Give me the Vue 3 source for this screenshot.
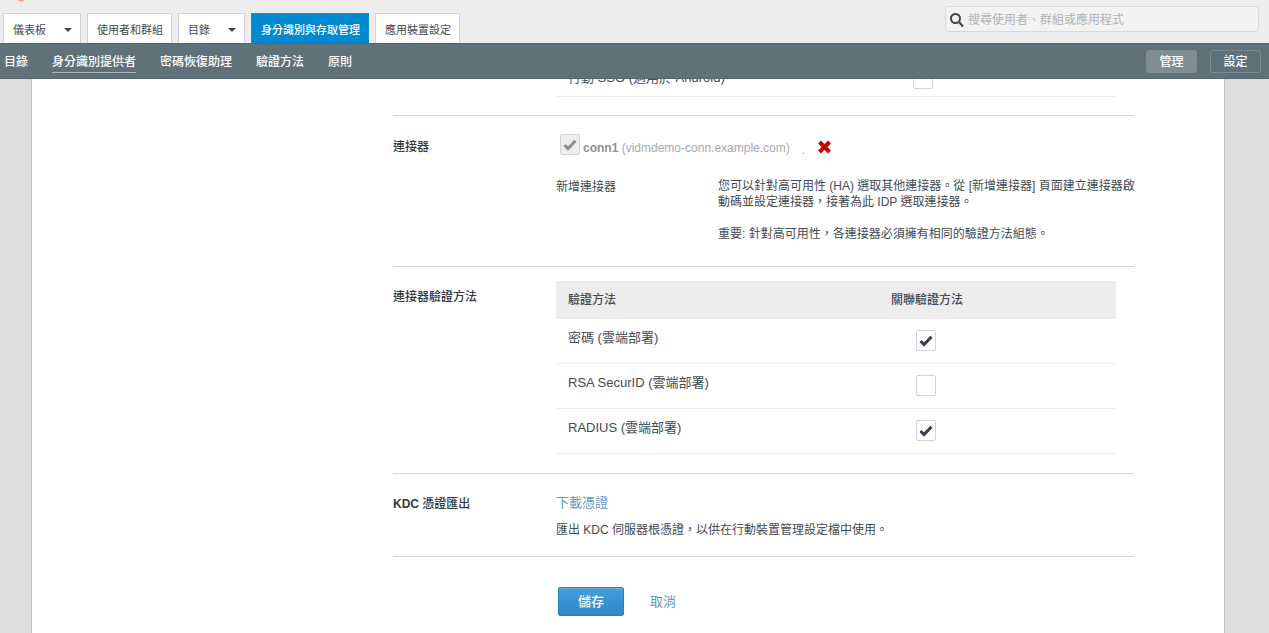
<script setup>
import { ref } from 'vue'

const tabs = [
  { name: '儀表板', menu: true },
  { name: '使用者和群組' },
  { name: '目錄', menu: true },
  { name: '身分識別與存取管理', active: true },
  { name: '應用裝置設定' },
]
const links = [
  { name: '目錄' },
  { name: '身分識別提供者', active: true },
  { name: '密碼恢復助理' },
  { name: '驗證方法' },
  { name: '原則' },
]
const methods = ref([
  { id: 'password', name: '密碼 (雲端部署)', on: true },
  { id: 'securid', name: 'RSA SecurID (雲端部署)', on: false },
  { id: 'radius', name: 'RADIUS (雲端部署)', on: true },
])
const mobileSso = ref(false)
const connector = ref(true)
const query = ref('')
</script>

<template>
  <div class="page">
    <header class="top">
      <svg class="logo" viewBox="0 0 8 2" aria-hidden="true"><path d="M0 0H8L6 1L4 2L2 1Z" /></svg>
      <nav class="tabs">
        <div v-for="t in tabs" :key="t.name" class="tab" :class="{ active: t.active }">
          <a href="#">{{ t.name }}</a>
          <button v-if="t.menu" type="button" :aria-label="t.name"><span class="caret"></span></button>
        </div>
      </nav>
      <div class="search">
        <svg viewBox="0 0 16 16" aria-hidden="true">
          <circle cx="6.5" cy="6.5" r="4.5" /><path d="M10 10L14 14.500" />
        </svg>
        <input v-model="query" type="text" aria-label="搜尋" placeholder="搜尋使用者、群組或應用程式" />
      </div>
    </header>

    <div class="subnav">
      <nav>
        <a v-for="l in links" :key="l.name" href="#" :class="{ active: l.active }">{{ l.name }}</a>
      </nav>
      <div class="modes">
        <button type="button" class="on">管理</button>
        <button type="button">設定</button>
      </div>
    </div>

    <main class="card">
      <section class="section first">
        <div class="body">
          <div class="peek">
            <label for="sso">行動 SSO (適用於 Android)</label>
            <span class="box"><input id="sso" v-model="mobileSso" type="checkbox" /></span>
          </div>
        </div>
      </section>

      <section class="section connectors">
        <h2>連接器</h2>
        <div class="body">
          <div class="conn">
            <span class="box disabled">
              <input id="conn" v-model="connector" type="checkbox" disabled />
              <svg viewBox="0 0 14 12" aria-hidden="true"><path d="M1.500 6L5 9.500L12.500 1.800" /></svg>
            </span>
            <label for="conn"><b>conn1</b> <span>(vidmdemo-conn.example.com)</span></label>
            <i class="dot">.</i>
            <button type="button" class="remove" aria-label="移除">
              <svg viewBox="0 0 13 14" aria-hidden="true"><path d="M1.500 2L11.500 12M11.500 2L1.500 12" /></svg>
            </button>
          </div>
          <div class="add">
            <span>新增連接器</span>
            <div>
              <p>您可以針對高可用性 (HA) 選取其他連接器。從 [新增連接器] 頁面建立連接器啟動碼並設定連接器，接著為此 IDP 選取連接器。</p>
              <p>重要: 針對高可用性，各連接器必須擁有相同的驗證方法組態。</p>
            </div>
          </div>
        </div>
      </section>

      <section class="section auth">
        <h2>連接器驗證方法</h2>
        <div class="body">
          <table>
            <thead>
              <tr><th scope="col">驗證方法</th><th scope="col">關聯驗證方法</th></tr>
            </thead>
            <tbody>
              <tr v-for="m in methods" :key="m.id">
                <td><label :for="m.id">{{ m.name }}</label></td>
                <td>
                  <span class="box">
                    <input :id="m.id" v-model="m.on" type="checkbox" />
                    <svg v-if="m.on" viewBox="0 0 14 12" aria-hidden="true"><path d="M1.500 6L5 9.500L12.500 1.800" /></svg>
                  </span>
                </td>
              </tr>
            </tbody>
          </table>
        </div>
      </section>

      <section class="section kdc">
        <h2><b>KDC</b> 憑證匯出</h2>
        <div class="body">
          <a href="#">下載憑證</a>
          <p>匯出 KDC 伺服器根憑證，以供在行動裝置管理設定檔中使用。</p>
        </div>
      </section>

      <div class="actions">
        <button type="button">儲存</button>
        <a href="#">取消</a>
      </div>
    </main>
  </div>
</template>

<style>
body {
  background: #dcdddf;
}
</style>

<style scoped>
.page {
  height: 100vh;
  display: flex;
  flex-direction: column;
  overflow: hidden;
  font: 12px/16px "Liberation Sans", "Noto Sans CJK TC", sans-serif;
  color: #444b52;
}
* {
  box-sizing: border-box;
}
button,
input {
  font: inherit;
  color: inherit;
  margin: 0;
}
a {
  color: inherit;
  text-decoration: none;
}
p,
h2 {
  margin: 0;
}

.top {
  position: relative;
  flex: none;
  display: flex;
  justify-content: space-between;
  height: 43px;
  padding: 0 10px 0 3px;
  background: #ededed;
}
.logo {
  position: absolute;
  left: 17px;
  top: 0;
  width: 8px;
  height: 2px;
  fill: #f3a07c;
}
.tabs {
  display: flex;
  align-items: flex-end;
  gap: 6px;
  font-size: 11px;
}
.tab {
  display: flex;
  align-items: center;
  height: 30px;
  padding: 2px 8px 0 9px;
  background: #fff;
  border: 1px solid #d2d2d2;
  border-bottom: 0;
  white-space: nowrap;
}
.tab.active {
  background: #0089d0;
  border-color: #1992d2;
  color: #fff;
  font-weight: 500;
}
.tab button {
  padding: 0;
  margin-left: 18px;
  border: 0;
  background: none;
  display: flex;
}
.caret {
  border: 4px solid transparent;
  border-top-color: #3c444c;
  border-bottom: 0;
}
.search {
  display: flex;
  align-items: center;
  width: 25%;
  height: 26px;
  margin-top: 6px;
  padding: 2px 3px 0;
  border: 1px solid #d9d9d9;
  border-radius: 4px;
  background: #f2f2f2;
}
.search svg {
  flex: none;
  width: 16px;
  height: 16px;
  margin-right: 3px;
  fill: none;
  stroke: #3d4650;
  stroke-width: 2;
}
.search input {
  flex: 1;
  min-width: 0;
  padding: 0;
  border: 0;
  background: none;
  outline: 0;
}
.search input::placeholder {
  color: #b3b3b3;
}

.subnav {
  flex: none;
  display: flex;
  align-items: center;
  justify-content: space-between;
  height: 36px;
  padding: 0 8px 0 4px;
  background: #5f7179;
  border-top: 1px solid #55676e;
  border-bottom: 1px solid #55676e;
  color: #fff;
  font-weight: 500;
}
.subnav nav {
  display: flex;
  gap: 24px;
  margin-top: 2px;
}
.subnav nav a {
  padding: 3px 0 2px;
  border-bottom: 1px solid transparent;
}
.subnav nav a.active {
  border-color: #aab5b9;
}
.modes {
  display: flex;
  gap: 13px;
}
.modes button {
  width: 51px;
  height: 23px;
  padding: 1px 0 0;
  border: 1px solid #7c8c92;
  border-radius: 3px;
  background: none;
  color: #fff;
  font-weight: 500;
}
.modes .on {
  background: #7f8e94;
  border-color: #7f8e94;
}

.card {
  flex: 1;
  min-height: 0;
  margin: 0 44px 0 31px;
  padding: 0 90px 0 361px;
  background: #fff;
  border: 1px solid #bebfc1;
  border-width: 0 1px;
  overflow: hidden;
}
.section {
  display: grid;
  grid-template-columns: 163px 1fr;
  border-bottom: 1px solid #d3d5d5;
}
.section h2 {
  font-size: 12px;
  line-height: 16px;
  font-weight: 500;
  color: #333a42;
}
.body {
  grid-column: 2;
}
.first {
  padding: 0 18px 18px 0;
}
.peek {
  display: grid;
  grid-template: 10px / 323px 1fr;
  align-items: end;
  height: 18px;
  padding: 0 12px;
  overflow: hidden;
  border-bottom: 1px solid #eee;
  font-size: 13px;
}
.peek label {
  padding-bottom: 3px;
}
.box {
  position: relative;
  display: inline-flex;
  vertical-align: top;
}
.peek .box {
  justify-self: start;
  margin-left: 22px;
}
.box input {
  appearance: none;
  width: 20px;
  height: 21px;
  border: 1px solid #d3d3d3;
  border-radius: 2px;
  background: #fff;
}
.box svg {
  position: absolute;
  left: 3px;
  top: 5px;
  width: 14px;
  height: 12px;
  fill: none;
  stroke: #35414f;
  stroke-width: 3;
  pointer-events: none;
}
.disabled input {
  background: #eee;
}
.disabled svg {
  stroke: #8d8d8d;
}

.connectors {
  padding: 18px 0 24px;
}
.connectors h2 {
  padding-top: 5px;
}
.conn {
  display: flex;
  align-items: flex-start;
  padding-left: 4px;
}
.conn label {
  padding: 6px 0 0 3px;
  color: #8f8f8f;
  font-weight: 500;
}
.conn label span {
  color: #a9a9a9;
}
.dot {
  margin-left: 12px;
  padding-top: 8px;
  font-style: normal;
  color: #aaa;
}
.remove {
  display: flex;
  margin: 6px 0 0 13px;
  padding: 0;
  border: 0;
  background: none;
}
.remove svg {
  width: 13px;
  height: 14px;
  stroke: #c90000;
  stroke-width: 4;
}
.add {
  display: grid;
  grid-template-columns: 162px 1fr;
  margin: 20px -8px 0 0;
}
.add > span {
  padding-top: 1px;
}
.add p + p {
  margin-top: 16px;
}

.auth {
  padding: 14px 18px 19px 0;
}
.auth h2 {
  padding-top: 8px;
}
table {
  width: 100%;
  border-collapse: separate;
  border-spacing: 0;
}
th {
  height: 38px;
  padding: 0 12px;
  background: #ededed;
  font-weight: 500;
  text-align: left;
}
th:first-child {
  width: 323px;
}
td {
  height: 45px;
  padding: 11px 12px 0;
  border-bottom: 1px solid #eee;
  vertical-align: top;
  font-size: 13px;
}
td .box {
  margin-left: 25px;
}

.kdc {
  padding: 21px 0 18px;
}
.kdc h2 {
  padding-top: 1px;
}
.kdc a {
  display: inline-block;
  font-size: 13px;
  color: #5f97c5;
}
.kdc p {
  margin-top: 11px;
}

.actions {
  display: flex;
  align-items: center;
  gap: 26px;
  padding: 30px 0 0 165px;
  font-size: 13px;
}
.actions button {
  width: 66px;
  height: 29px;
  padding: 0;
  border: 1px solid #2a7fbd;
  border-radius: 2px;
  background: linear-gradient(#459edc, #2f88c6);
  box-shadow: inset 0 1px #6fb5e4;
  color: #fff;
  font-weight: 500;
}
.actions a {
  color: #5f97c5;
}
</style>
